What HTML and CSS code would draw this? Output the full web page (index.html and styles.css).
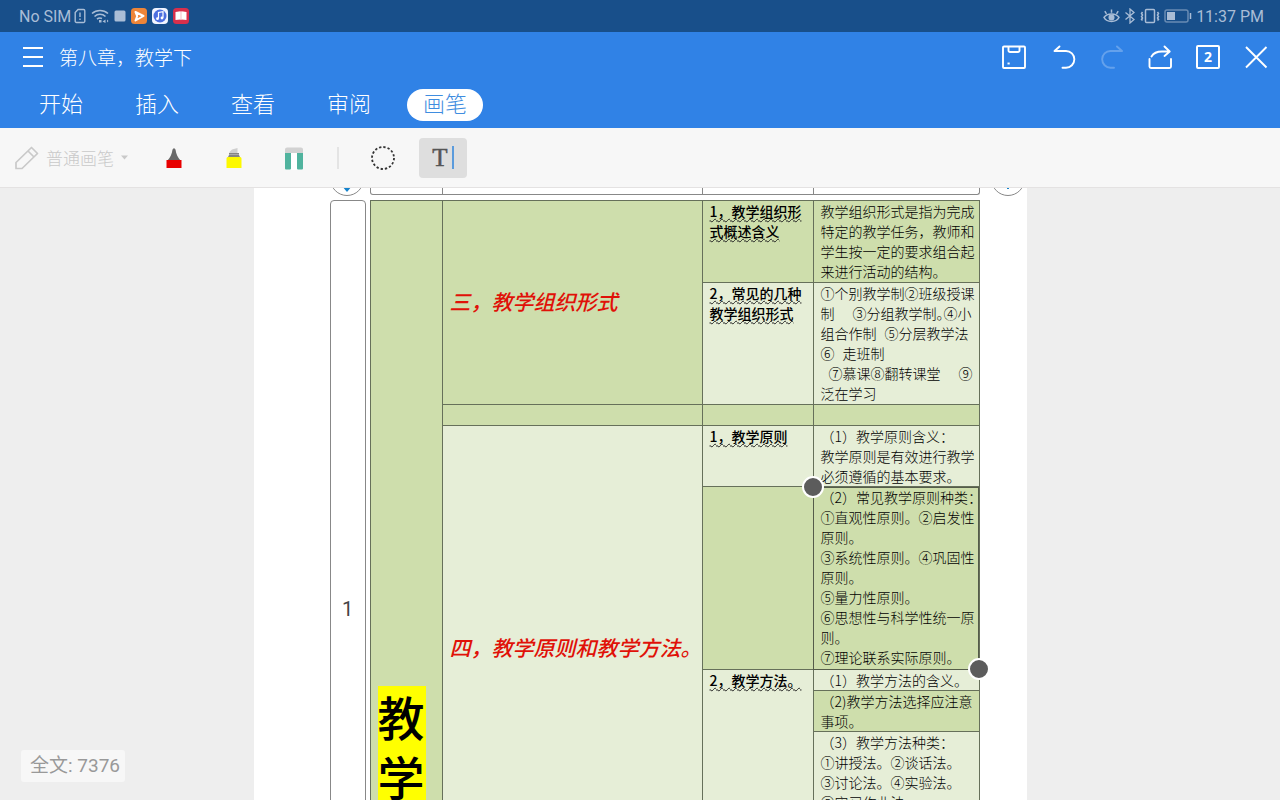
FILE: index.html
```html
<!DOCTYPE html>
<html lang="zh-CN">
<head>
<meta charset="utf-8">
<title>第八章，教学下</title>
<link rel="stylesheet" href="styles.css">
</head>
<body>
<div class="status">
  <div class="status-left">
    <span>No SIM</span>
    <svg class="sim" width="12" height="16" viewBox="0 0 12 16" fill="none" stroke="currentColor" stroke-width="1.4"><path d="M4 1.5h5.5a1.3 1.3 0 0 1 1.3 1.3v10.4a1.3 1.3 0 0 1-1.3 1.3h-7A1.3 1.3 0 0 1 1.2 13.200V4.500z"/><path d="M6 4.500v4.500M6 10.500v1.600"/></svg>
    <svg width="18" height="16" viewBox="0 0 18 16" fill="none" stroke="currentColor" stroke-width="1.600"><path d="M1 5.500a12 12 0 0 1 16 0M3.500 8.500a8 8 0 0 1 11 0M6 11.200a4.500 4.500 0 0 1 5-.7"/><path d="M8 12h2.500v2.500H8zM11.500 13.500l3-2v3.500zM16 11.500l1.500 1.500-1.500 1.500" fill="currentColor" stroke="none"/></svg>
    <svg width="12" height="12" viewBox="0 0 12 12"><rect x="0.500" y="0.500" width="11" height="11" rx="1.500" fill="currentColor"/></svg>
    <svg width="16" height="16" viewBox="0 0 16 16"><rect width="16" height="16" rx="3.500" fill="#ee8538"/><path d="M4.500 4l8 4-8 4.500 1.700-4.300z" fill="none" stroke="#fff" stroke-width="2" stroke-linejoin="round"/></svg>
    <svg width="16" height="16" viewBox="0 0 16 16"><rect width="16" height="16" rx="4" fill="#f2f5ff"/><circle cx="8" cy="8" r="6.500" fill="#4c6fe0"/><path d="M6.500 10.500v-6l4.500-.8v6" fill="none" stroke="#fff" stroke-width="1.200"/><circle cx="5.500" cy="10.700" r="1.400" fill="#fff"/><circle cx="10" cy="10" r="1.400" fill="#fff"/></svg>
    <svg width="16" height="16" viewBox="0 0 16 16"><rect width="16" height="16" rx="3.500" fill="#d8304c"/><path d="M2.500 4l5-.8.5.8.5-.8 5 .8v8l-5-.5-.5.700-.5-.700-5 .5z" fill="#fff"/><path d="M8 4v8" stroke="#e9a0ac" stroke-width=".7"/></svg>
  </div>
  <div class="status-right">
    <svg width="17" height="16" viewBox="0 0 17 16" fill="none" stroke="currentColor" stroke-width="1.500"><path d="M1 9.500C4 4.800 13 4.800 16 9.500 13 14.800 4 14.800 1 9.500zM3.500 5.800L1.800 3.200M8.500 4.800V1.500M13.500 5.800l1.700-2.600"/><circle cx="8.500" cy="9.500" r="2.300" fill="currentColor"/></svg>
    <svg width="12" height="16" viewBox="0 0 12 16" fill="none" stroke="currentColor" stroke-width="1.300"><path d="M1.500 4.500l8.500 7-4 3.500V1l4 3.500-8.500 7"/></svg>
    <svg width="20" height="16" viewBox="0 0 20 16" fill="none" stroke="currentColor" stroke-width="1.500"><rect x="5.500" y="1.500" width="9" height="13" rx="1"/><path d="M2.500 4l-1 1.500 1 1.500-1 1.500 1 1.500-1 1.500 1 1M17.500 4l1 1.500-1 1.500 1 1.500-1 1.500 1 1.500-1 1"/></svg>
    <svg width="28" height="14" viewBox="0 0 28 14"><rect x="1" y="1" width="23" height="12" rx="2" fill="none" stroke="currentColor" stroke-opacity=".55" stroke-width="1.500"/><rect x="3" y="3" width="8" height="8" fill="currentColor"/><path d="M26.500 4v6" stroke="currentColor" stroke-width="1.500"/></svg>
    <span>11:37 PM</span>
  </div>
</div>

<header class="header">
  <div class="titlebar">
    <button class="icon-btn" aria-label="菜单"><svg width="22" height="22" viewBox="0 0 22 22" fill="none" stroke="#fff" stroke-width="1.800"><path d="M1 2h20M1 11h20M1 20h20"/></svg></button>
    <h1 class="title">第八章，教学下</h1>
    <div class="actions">
      <button class="icon-btn save" aria-label="保存"><svg width="24" height="24" viewBox="0 0 24 24" fill="none" stroke="#fff" stroke-width="1.900"><rect x="1" y="1.500" width="22" height="21.500" rx="1"/><path d="M6.500 1.500v4a1.500 1.500 0 0 0 1.500 1.500h8a1.500 1.500 0 0 0 1.500-1.500v-4"/><path d="M5.500 18.500h2.200"/></svg></button>
      <button class="icon-btn" aria-label="撤销"><svg width="24" height="24" viewBox="0 0 24 24" fill="none" stroke="#fff" stroke-width="1.900" stroke-linecap="round" stroke-linejoin="round"><path d="M7.500 1.500L2.500 6H14a8.300 8.300 0 0 1 0 16.700h-3.500"/></svg></button>
      <button class="icon-btn faded" aria-label="重做" disabled><svg width="24" height="24" viewBox="0 0 24 24" fill="none" stroke="#fff" stroke-width="1.900" stroke-linecap="round" stroke-linejoin="round"><path d="M17 1.500L22 6H10.500a8.300 8.300 0 0 0 0 16.700H14"/></svg></button>
      <button class="icon-btn" aria-label="分享"><svg width="24" height="24" viewBox="0 0 24 24" fill="none" stroke="#fff" stroke-width="1.900" stroke-linecap="round" stroke-linejoin="round"><path d="M1.500 14v7.500A1.500 1.500 0 0 0 3 23h18.500a1.500 1.500 0 0 0 1.500-1.500V14M3.500 11.500C5.500 8 9.500 6.500 14 6.500h7.500M16.500 1.500l5.200 5-5.200 4.500"/></svg></button>
      <button class="icon-btn count" aria-label="窗口 2">2</button>
      <button class="icon-btn" aria-label="关闭"><svg width="24" height="24" viewBox="0 0 24 24" fill="none" stroke="#fff" stroke-width="1.900"><path d="M2 2l20.500 20.500M22.500 2L2 22.500"/></svg></button>
    </div>
  </div>
  <nav class="tabs">
    <button class="tab">开始</button>
    <button class="tab">插入</button>
    <button class="tab">查看</button>
    <button class="tab">审阅</button>
    <button class="tab active">画笔</button>
  </nav>
</header>

<div class="toolbar">
  <button class="pen" disabled>
    <svg width="24" height="24" viewBox="0 0 24 24" fill="none" stroke="#c9c9c9" stroke-width="1.700" stroke-linejoin="round"><path d="M1 16.500L16.500 1.500l6 6L7 22.500H1zM13 5l6 6"/></svg>
    <span>普通画笔</span>
    <svg width="7" height="5" viewBox="0 0 7 5"><path d="M0 0.500h7L3.500 4.500z" fill="#c9c9c9"/></svg>
  </button>
  <button class="tool" aria-label="红色画笔"><svg width="16" height="20" viewBox="0 0 16 20"><path d="M6.500 1.500L8 0l1.500 1.500C10 6 12 10 14.500 12.500h-13C4 10 6 6 6.500 1.500z" fill="#6a6a6a"/><path d="M.5 12h15v8H.5z" fill="#e80000"/></svg></button>
  <button class="tool" aria-label="荧光笔"><svg width="16" height="20" viewBox="0 0 16 20"><path d="M3.500 4L6 1.500 11.500 0v5h-8z" fill="#cfcfcf"/><path d="M3 5h10v2l1.500 3h-13L3 7z" fill="#858585"/><path d="M3 6.500h10" stroke="#aaa"/><path d="M.5 10.500a1.500 1.500 0 0 1 1.500-1.500h12a1.500 1.500 0 0 1 1.500 1.500V20H.5z" fill="#fdf900"/></svg></button>
  <button class="tool" aria-label="橡皮擦"><svg width="20" height="24" viewBox="0 0 20 24"><path d="M1 7V3.500A2 2 0 0 1 3 1.500h14a2 2 0 0 1 2 2V7z" fill="#d2d2d2"/><path d="M6 7h8v17H6z" fill="#fff"/><path d="M1 7h6v15.500a1 1 0 0 1-1 1H2a1 1 0 0 1-1-1zM13 7h6v15.500a1 1 0 0 1-1 1h-4a1 1 0 0 1-1-1z" fill="#50b39e"/></svg></button>
  <span class="divider"></span>
  <button class="tool lasso" aria-label="套索"><svg width="26" height="26" viewBox="0 0 26 26"><circle cx="13" cy="13" r="11" fill="none" stroke="#333" stroke-width="1.800" stroke-dasharray="2.300 2.020"/></svg></button>
  <button class="tool text-tool" aria-label="文字"><span>T</span><i class="caret"></i></button>
</div>

<main class="doc">
  <div class="page">
    <div class="knob knob-left"><svg width="10" height="6" viewBox="0 0 10 6"><path d="M0 0h10L5 6z" fill="#1583cc"/></svg></div>
    <div class="strip"><i></i><i></i><i></i><i></i></div>
    <div class="knob knob-right"><svg width="4" height="4" viewBox="0 0 4 4"><path d="M1 0h2v3H1z" fill="#1583cc"/></svg></div>
    <div class="gutter">1</div>
    <table class="grid">
      <colgroup><col class="c1"><col class="c2"><col class="c3"><col class="c4"></colgroup>
      <tr class="r1">
        <td class="dark big" rowspan="9"><mark>教</mark><mark>学</mark></td>
        <td class="dark heading" rowspan="2">三，教学组织形式</td>
        <td class="dark topic"><u>1，教学组织形<br>式概述含义</u></td>
        <td class="dark">教学组织形式是指为完成<br>特定的教学任务，教师和<br>学生按一定的要求组合起<br>来进行活动的结构。</td>
      </tr>
      <tr class="r2">
        <td class="light topic"><u>2，常见的几种<br>教学组织形式</u></td>
        <td class="light">①个别教学制②班级授课<br>制<span class="gap wide"></span>③分组教学制<span class="half">。</span>④小<br>组合作制<span class="gap"></span>⑤分层教学法<br>⑥<span class="gap"></span>走班制<br><span class="gap"></span>⑦慕课⑧翻转课堂<span class="gap wide"></span>⑨<br>泛在学习</td>
      </tr>
      <tr class="r3"><td class="dark"></td><td class="dark"></td><td class="dark"></td></tr>
      <tr class="r4">
        <td class="light heading" rowspan="5">四，教学原则和教学方法。</td>
        <td class="light topic"><u>1，教学原则</u></td>
        <td class="light">（1）教学原则含义：<br>教学原则是有效进行教学<br>必须遵循的基本要求。</td>
      </tr>
      <tr class="r5">
        <td class="dark"></td>
        <td class="dark selected">（2）常见教学原则种类：<br>①直观性原则。②启发性<br>原则。<br>③系统性原则。④巩固性<br>原则。<br>⑤量力性原则。<br>⑥思想性与科学性统一原<br>则。<br>⑦理论联系实际原则。<i class="handle start"></i><i class="handle end"></i></td>
      </tr>
      <tr class="r6">
        <td class="light topic" rowspan="3"><u>2，教学方法。</u></td>
        <td class="light">（1）教学方法的含义。</td>
      </tr>
      <tr class="r7"><td class="dark">（2)教学方法选择应注意<br>事项。</td></tr>
      <tr class="r8"><td class="light">（3）教学方法种类：<br>①讲授法。②谈话法。<br>③讨论法。④实验法。<br>⑤实习作业法。</td></tr>
      <tr class="r9"><td class="dark"></td><td class="dark"></td><td class="dark"></td></tr>
    </table>
  </div>
  <div class="word-count">全文: 7376</div>
</main>
</body>
</html>
```

FILE: styles.css
```css
* { box-sizing: border-box; }
body {
  margin: 0;
  height: 100vh;
  display: flex;
  flex-direction: column;
  overflow: hidden;
  background: #eee;
  font-family: Roboto, "Noto Sans CJK SC", sans-serif;
}
button {
  border: 0;
  padding: 0;
  background: none;
  color: inherit;
  font: inherit;
}
svg { display: block; flex: none; }

.status {
  flex: none;
  height: 32px;
  padding: 0 16px 0 19px;
  display: flex;
  align-items: center;
  justify-content: space-between;
  background: #184f8a;
  color: #a9bdd6;
  font-size: 16px;
}
.status-left, .status-right { display: flex; align-items: center; }
.status-left { gap: 5px; }
.status-right { gap: 4px; }
.sim { margin-left: -2px; }

.header { flex: none; background: #3082e6; color: #fff; font-weight: 300; }
.titlebar {
  height: 49px;
  padding: 0 12px 0 22px;
  display: flex;
  align-items: center;
}
.title { margin: 0 0 0 15px; padding-top: 4px; font-size: 19px; font-weight: 300; line-height: 28px; }
.actions { margin-left: auto; display: flex; align-items: center; gap: 24px; }
.icon-btn { display: flex; align-items: center; justify-content: center; }
.save { margin-right: 2px; }
.faded { opacity: .25; }
.count {
  width: 24px;
  height: 24px;
  border: 2px solid #fff;
  border-radius: 2px;
  font-family: "Noto Sans", sans-serif;
  font-size: 14px;
  font-weight: 700;
}
.tabs { height: 47px; padding: 0 23px; display: flex; gap: 20px; align-items: center; }
.tab {
  height: 32px;
  padding: 0 16px;
  border-radius: 16px;
  font-size: 22px;
  line-height: 32px;
}
.tab.active { background: #fff; color: #3f8de0; }

.toolbar {
  flex: none;
  height: 60px;
  padding: 0 15px;
  display: flex;
  align-items: center;
  background: #f7f7f7;
  border-bottom: 1px solid #e4e2e2;
}
.pen { display: flex; align-items: center; gap: 7px; color: #c9c9c9; font-size: 17px; font-weight: 300; margin-right: 22px; }
.tool { width: 48px; height: 40px; margin-right: 12px; display: flex; align-items: center; justify-content: center; }
.divider { width: 2px; height: 22px; margin: 0 20px 0 7px; background: #e4e4e4; }
.lasso { margin-right: 12px; }
.text-tool {
  gap: 4px;
  margin: 0;
  border-radius: 4px;
  background: #dedede;
  color: #555;
  font-family: "Liberation Serif", serif;
  font-size: 25px;
}
.text-tool span { -webkit-text-stroke: 0.5px #555; }
.caret { width: 2px; height: 23px; background: #5b9bdc; }

.doc { position: relative; flex: 1; min-height: 0; overflow: hidden; }
.page {
  position: relative;
  width: 773px;
  margin: 0 auto;
  padding-left: 76px;
  display: grid;
  grid-template-columns: 36px 610px;
  grid-template-rows: 7px auto;
  column-gap: 4px;
  row-gap: 5px;
  background: #fff;
}
.strip {
  grid-column: 2;
  display: grid;
  grid-template-columns: 71px 260px 111px 1fr;
  border: 1px solid #888;
  border-top: 0;
  border-radius: 0 0 3px 3px;
}
.strip i + i { border-left: 1px solid #888; }
.knob {
  position: absolute;
  top: -26px;
  width: 34px;
  height: 34px;
  border: 1px solid #888;
  border-radius: 50%;
  background: #fff;
}
.knob svg { margin: 23px auto 0; }
.knob-left { left: 76px; }
.knob-right { right: 2px; }
.gutter {
  height: 818px;
  display: flex;
  align-items: center;
  justify-content: center;
  border: 1px solid #888;
  border-radius: 4px;
  color: #444;
  font-size: 20px;
}

.grid {
  width: 100%;
  table-layout: fixed;
  border-collapse: collapse;
  font-family: "Noto Sans CJK SC", sans-serif;
  font-size: 14px;
  font-weight: 300;
  line-height: 20px;
  color: #000;
}
.c1 { width: 72px; }
.c2 { width: 260px; }
.c3 { width: 111px; }
.grid td { padding: 0 0 0 7px; border: 1px solid #66705a; white-space: pre; vertical-align: top; }
.dark { background: #cedeac; }
.light { background: #e6eed7; }
.grid .topic { font-weight: 500; }
.topic u { text-decoration: underline wavy 1px #222; text-underline-offset: 1px; }
.grid .heading {
  padding-bottom: 4px;
  vertical-align: middle;
  color: #e01108;
  font-size: 21px;
  font-weight: 500;
  font-style: italic;
}
.grid .big { padding: 0 7px; vertical-align: middle; }
.big mark { display: block; width: 48px; background: #ff0; color: #000; font-size: 47px; font-weight: 500; line-height: 60px; }
.gap { display: inline-block; width: 8px; }
.gap.wide { width: 18px; }
.half { font-feature-settings: "halt"; }
.r1 { height: 82px; }
.r2 { height: 122px; }
.r3 { height: 21px; }
.r4 { height: 61px; }
.r5 { height: 183px; }
.r6 { height: 21px; }
.r7 { height: 41px; }
.r8 { height: 140px; }
.r9 { height: 419px; }
.selected { position: relative; outline: 1px solid #555c4a; outline-offset: -1px; }
.handle {
  position: absolute;
  z-index: 1;
  width: 22px;
  height: 22px;
  border: 2px solid #fff;
  border-radius: 50%;
  background: #5c5c5c;
}
.handle.start { left: -12px; top: -11px; }
.handle.end { right: -11px; bottom: -11px; }

.word-count {
  position: absolute;
  left: 21px;
  bottom: 18px;
  padding: 2px 5px 2px 9px;
  border-radius: 3px;
  background: #f7f7f7;
  color: #999;
  font-size: 19px;
  line-height: 28px;
}
```
